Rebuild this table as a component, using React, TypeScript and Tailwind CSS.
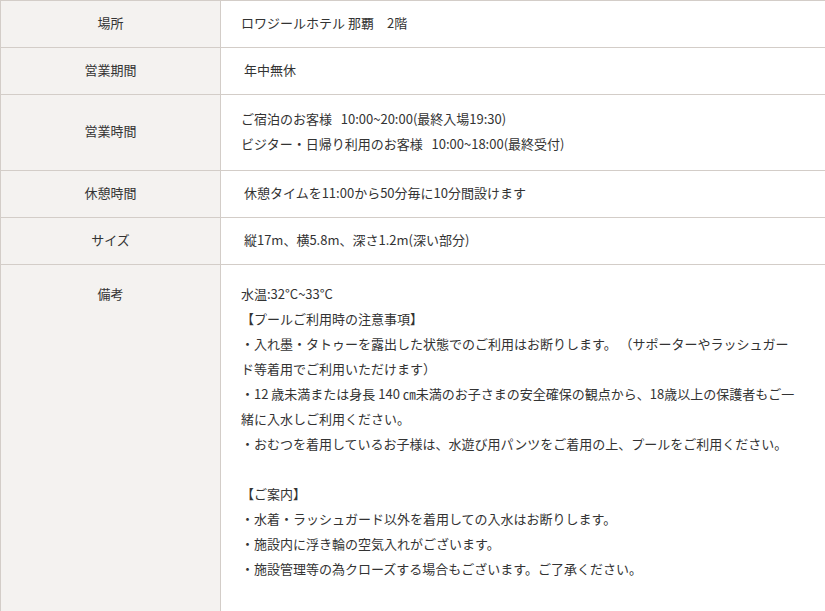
import type { ReactNode } from "react";

const rows: { label: string; h: string; body: ReactNode }[] = [
  { label: "場所", h: "h-[47px]", body: <p>ロワジールホテル 那覇　2階</p> },
  { label: "営業期間", h: "h-[47px]", body: <p>&nbsp;年中無休</p> },
  {
    label: "営業時間",
    h: "h-[76px]",
    body: (
      <>
        <p>ご宿泊のお客様&nbsp;&nbsp;&nbsp;10:00~20:00(最終入場19:30)</p>
        <p>ビジター・日帰り利用のお客様&nbsp;&nbsp;&nbsp;10:00~18:00(最終受付)</p>
      </>
    ),
  },
  { label: "休憩時間", h: "h-[47px]", body: <p>&nbsp;休憩タイムを11:00から50分毎に10分間設けます</p> },
  { label: "サイズ", h: "h-[47px]", body: <p>&nbsp;縦17m、横5.8m、深さ1.2m(深い部分)</p> },
];

const notes = [
  "水温:32°C~33°C",
  "【プールご利用時の注意事項】",
  "・入れ墨・タトゥーを露出した状態でのご利用はお断りします。 （サポーターやラッシュガー",
  "ド等着用でご利用いただけます）",
  "・12 歳未満または身長 140 ㎝未満のお子さまの安全確保の観点から、18歳以上の保護者もご一",
  "緒に入水しご利用ください。",
  "・おむつを着用しているお子様は、水遊び用パンツをご着用の上、プールをご利用ください。",
  "",
  "【ご案内】",
  "・水着・ラッシュガード以外を着用しての入水はお断りします。",
  "・施設内に浮き輪の空気入れがございます。",
  "・施設管理等の為クローズする場合もございます。ご了承ください。",
];

export default function App() {
  return (
    <div className="min-h-screen bg-white font-['Noto_Sans_CJK_JP','Noto_Sans',sans-serif] text-[13px] leading-[25px] text-[#333]">
      <div className="border-t border-l border-[#d3cdc8]">
        {rows.map((r) => (
          <div key={r.label} className={`flex border-b border-[#d3cdc8] ${r.h}`}>
            <div className="w-[220px] shrink-0 bg-[#f4f2f0] border-r border-[#d3cdc8] pb-1 flex items-center justify-center">
              {r.label}
            </div>
            <div className="flex-1 px-5 pb-1 flex flex-col justify-center whitespace-nowrap">{r.body}</div>
          </div>
        ))}

        {/* 備考 */}
        <div className="flex border-b border-[#d3cdc8]">
          <div className="w-[220px] shrink-0 bg-[#f4f2f0] border-r border-[#d3cdc8] pt-4 text-center">
            備考
          </div>
          <div className="flex-1 px-5 pt-4 pb-10 whitespace-nowrap">
            {notes.map((n, i) => (
              <p key={i} className="h-[25px]">
                {n}
              </p>
            ))}
          </div>
        </div>
      </div>
    </div>
  );
}
